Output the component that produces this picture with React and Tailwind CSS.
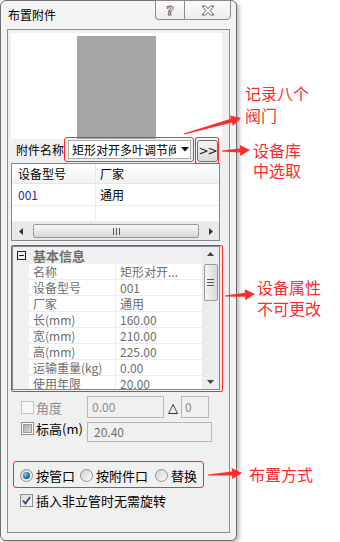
import React from 'react';

const ui = "font-['Noto_Sans_CJK_SC','Noto_Sans',sans-serif]";

const props = [
    ['名称', '矩形对开...'],
    ['设备型号', '001'],
    ['厂家', '通用'],
    ['长(mm)', '160.00'],
    ['宽(mm)', '210.00'],
    ['高(mm)', '225.00'],
    ['运输重量(kg)', '0.00'],
    ['使用年限', '20.00'],
];

// tapered red arrow, tail -> tip
const arrowPoints = (x1, y1, x2, y2) => {
    const len = Math.hypot(x2 - x1, y2 - y1);
    const dx = (x2 - x1) / len, dy = (y2 - y1) / len;
    const nx = -dy, ny = dx;
    const bx = x2 - dx * 10, by = y2 - dy * 10;
    const p = [
        [x1 + nx * 0.6, y1 + ny * 0.6],
        [bx + nx * 2, by + ny * 2],
        [bx + nx * 5.5, by + ny * 5.5],
        [x2, y2],
        [bx - nx * 5.5, by - ny * 5.5],
        [bx - nx * 2, by - ny * 2],
        [x1 - nx * 0.6, y1 - ny * 0.6],
    ];
    return p.map(([a, b]) => `${a.toFixed(1)},${b.toFixed(1)}`).join(' ');
};

const CheckBox = ({ state = 'off', disabled }) => (
    <div className={`w-[13px] h-[13px] shrink-0 border flex items-center justify-center ${disabled ? 'border-[#c4c4c4] bg-[#f6f6f6]' : 'border-[#8e8f8f] bg-white'}`}>
        {state === 'mixed' && <div className="w-[9px] h-[9px] bg-gradient-to-br from-[#a9a9a9] to-[#dcdcdc] border border-[#9a9a9a]" />}
        {state === 'on' && (
            <div className="w-[11px] h-[11px] bg-gradient-to-br from-[#dcdcdc] to-[#f8f8f8] flex items-center justify-center">
                <svg width="9" height="9" viewBox="0 0 9 9"><path d="M1 4.5 L3.5 7.5 L8 1" fill="none" stroke="#2a3d8f" strokeWidth="1.8" /></svg>
            </div>
        )}
    </div>
);

const Radio = ({ on }) => (
    <div className="w-[13px] h-[13px] shrink-0 rounded-full border border-[#8e8f8f] bg-gradient-to-br from-[#d4d4d4] to-[#fafafa] flex items-center justify-center">
        {on && <div className="w-[7px] h-[7px] rounded-full bg-[radial-gradient(circle_at_35%_35%,#7ed0f5,#1b6fa8_55%,#0d3f6b)]" />}
    </div>
);

export default function App() {
    return (
        <div className={`relative w-[340px] h-[542px] bg-white overflow-hidden text-[12px] leading-none text-black ${ui}`}>
            {/* window */}
            <div className="w-[237px] h-[541px] border border-[#6f6f6f] rounded-[6px] bg-[#f3f3f3] shadow-[2px_2px_4px_rgba(0,0,0,0.3)] flex flex-col">
                <div className="h-[28px] flex items-start shrink-0">
                    <span className="ml-[7px] mt-[8px] text-[12px]">布置附件</span>
                    <div className="ml-auto mr-[5px] -mt-[1px] flex h-[20px]">
                        <div className="w-[29px] border border-[#8a8a8a] border-r-0 rounded-bl-[4px] bg-gradient-to-b from-[#fbfbfb] to-[#ececec] flex items-center justify-center">
                            <span className="text-[13px] font-bold text-white [-webkit-text-stroke:0.8px_#5e5e5e] font-['DejaVu_Sans',sans-serif]">?</span>
                        </div>
                        <div className="w-[47px] border border-[#8a8a8a] rounded-br-[4px] bg-gradient-to-b from-[#fbfbfb] to-[#ececec] flex items-center justify-center">
                            <svg width="14" height="11" viewBox="0 0 14 11">
                                <path d="M1 1 H4.5 L7 3.6 L9.5 1 H13 L9 5.5 L13 10 H9.5 L7 7.4 L4.5 10 H1 L5 5.5 Z" fill="#fff" stroke="#5e5e5e" strokeWidth="1" />
                            </svg>
                        </div>
                    </div>
                </div>

                {/* inner panel */}
                <div className="ml-[6px] w-[223px] h-[504px] border border-[#8c8c8c] bg-[#f0f0f0] flex flex-col">
                    {/* preview */}
                    <div className="mt-[3px] ml-[3px] w-[211px] h-[106px] bg-white flex justify-center items-end">
                        <div className="w-[79px] h-[103px] bg-[#a6a6a6]" />
                    </div>

                    {/* name row */}
                    <div className="mt-[1px] h-[22px] flex items-start">
                        <span className="ml-[8px] w-[52px] mt-[4px] whitespace-nowrap overflow-hidden">附件名称</span>
                        <div className="w-[123px] h-[19px] border border-[#acacac] bg-white flex items-center">
                            <span className="ml-[3px] w-[104px] overflow-hidden whitespace-nowrap">矩形对开多叶调节阀</span>
                            <svg className="ml-[5px]" width="8" height="5" viewBox="0 0 8 5"><path d="M0 0 H8 L4 4.5 Z" fill="#111" /></svg>
                        </div>
                        <div className="ml-[6px] w-[21px] h-[22px] border border-[#707070] rounded-[3px] bg-gradient-to-b from-[#f3f3f3] to-[#dcdcdc] flex items-center justify-center text-[12px] text-[#222] font-['DejaVu_Sans',sans-serif] tracking-[-1px]">
                            &gt;&gt;
                        </div>
                    </div>

                    {/* device table */}
                    <div className="mt-[1px] ml-[3px] w-[209px] h-[78px] border border-[#828790] bg-white flex flex-col">
                        <div className="h-[20px] flex border-b border-[#e5e5e5] bg-gradient-to-b from-white to-[#f2f2f2]">
                            <div className="w-[84px] border-r border-[#e5e5e5] pl-[6px] flex items-center">设备型号</div>
                            <div className="pl-[4px] flex items-center">厂家</div>
                        </div>
                        <div className="h-[22px] flex border-b border-[#ececec]">
                            <div className="w-[84px] border-r border-[#ececec] pl-[6px] flex items-center text-[#1a2a9a]">001</div>
                            <div className="pl-[4px] flex items-center">通用</div>
                        </div>
                        <div className="h-[16px] flex border-b border-[#ececec]">
                            <div className="w-[84px] border-r border-[#ececec]" />
                        </div>
                        <div className="flex-1 bg-[#e9e9e9] flex items-center">
                            <svg className="ml-[7px]" width="4" height="7" viewBox="0 0 4 7"><path d="M4 0 V7 L0 3.5 Z" fill="#333" /></svg>
                            <div className="ml-[10px] w-[166px] h-[14px] rounded-[2px] border border-[#9a9a9a] bg-gradient-to-b from-[#f6f6f6] to-[#d8d8d8] flex items-center justify-center">
                                <svg width="7" height="7" viewBox="0 0 7 7"><path d="M0.5 0 V7 M3.5 0 V7 M6.5 0 V7" stroke="#555" strokeWidth="1" /></svg>
                            </div>
                            <svg className="ml-[10px]" width="4" height="7" viewBox="0 0 4 7"><path d="M0 0 V7 L4 3.5 Z" fill="#333" /></svg>
                        </div>
                    </div>

                    {/* property grid */}
                    <div className="mt-[5px] ml-[4px] w-[208px] h-[144px] border border-[#828790] bg-[#f0f0f0] flex overflow-hidden text-[#6d6d6d]">
                        <div className="flex-1 flex flex-col overflow-hidden">
                            <div className="h-[17px] shrink-0 flex items-center">
                                <div className="ml-[4px] w-[9px] h-[9px] border border-[#222] flex items-center justify-center">
                                    <div className="w-[5px] h-[1px] bg-[#222]" />
                                </div>
                                <span className="ml-[7px] font-bold text-[13px]">基本信息</span>
                            </div>
                            {props.map(([k, v]) => (
                                <div key={k} className="h-[16px] shrink-0 flex">
                                    <div className="w-[16px] shrink-0" />
                                    <div className="w-[87px] shrink-0 bg-white border-r border-b border-[#ececec] pl-[4px] flex items-center whitespace-nowrap">{k}</div>
                                    <div className="flex-1 bg-white border-b border-[#ececec] pl-[4px] flex items-center whitespace-nowrap">{v}</div>
                                </div>
                            ))}
                        </div>
                        <div className="w-[17px] shrink-0 bg-[#ececec] flex flex-col items-center">
                            <svg className="mt-[5px]" width="7" height="4" viewBox="0 0 7 4"><path d="M0 4 H7 L3.5 0 Z" fill="#444" /></svg>
                            <div className="mt-[8px] w-[14px] h-[37px] rounded-[2px] border border-[#9a9a9a] bg-gradient-to-r from-[#f6f6f6] to-[#d8d8d8] flex items-center justify-center">
                                <svg width="7" height="7" viewBox="0 0 7 7"><path d="M0 0.5 H7 M0 3.5 H7 M0 6.5 H7" stroke="#555" strokeWidth="1" /></svg>
                            </div>
                            <svg className="mt-auto mb-[5px]" width="7" height="4" viewBox="0 0 7 4"><path d="M0 0 H7 L3.5 4 Z" fill="#444" /></svg>
                        </div>
                    </div>

                    {/* angle row */}
                    <div className="mt-[6px] h-[22px] flex items-center">
                        <div className="ml-[13px] w-[66px] flex items-center">
                            <CheckBox disabled />
                            <span className="ml-[2px] text-[#8d8d8d] text-[13px]">角度</span>
                        </div>
                        <div className="w-[77px] h-[22px] border border-[#b8b8b8] bg-[#f0f0f0] pl-[4px] flex items-center text-[#8d8d8d]">0.00</div>
                        <span className="ml-[4px] w-[12px] text-[13px] font-['DejaVu_Sans',sans-serif]">△</span>
                        <div className="ml-[1px] w-[28px] h-[22px] border border-[#b8b8b8] bg-[#f0f0f0] pl-[3px] flex items-center text-[#8d8d8d]">0</div>
                    </div>

                    {/* elevation row */}
                    <div className="mt-[4px] h-[21px] flex items-start">
                        <div className="ml-[13px] w-[66px] flex items-center">
                            <CheckBox state="mixed" />
                            <span className="ml-[2px] text-[13px]">标高(m)</span>
                        </div>
                        <div className="w-[125px] h-[20px] border border-[#b8b8b8] bg-[#f0f0f0] pl-[6px] flex items-center text-[#6d6d6d]">20.40</div>
                    </div>

                    {/* placement mode */}
                    <div className="mt-[24px] h-[16px] flex items-center text-[13px]">
                        <div className="ml-[12px] w-[60px] flex items-center"><Radio on /><span className="ml-[3px]">按管口</span></div>
                        <div className="w-[75px] flex items-center"><Radio /><span className="ml-[3px]">按附件口</span></div>
                        <div className="flex items-center"><Radio /><span className="ml-[3px]">替换</span></div>
                    </div>

                    <div className="mt-[11px] h-[13px] flex items-center text-[13px]">
                        <div className="ml-[12px]"><CheckBox state="on" /></div>
                        <span className="ml-[3px]">插入非立管时无需旋转</span>
                    </div>
                </div>
            </div>

            {/* red highlight boxes */}
            <div className="absolute left-[64px] top-[137px] w-[130px] h-[25px] border border-[#ff2a2a] rounded-[3px]" />
            <div className="absolute left-[195px] top-[137px] w-[24px] h-[27px] border border-[#ff2a2a] rounded-[2px]" />
            <div className="absolute left-[11px] top-[245px] w-[212px] h-[147px] border border-[#ff2a2a] rounded-[2px]" />
            <div className="absolute left-[13px] top-[461px] w-[191px] h-[27px] border border-[#ff2a2a] rounded-[3px]" />

            {/* annotation arrows */}
            <svg className="absolute left-0 top-0 pointer-events-none" width="340" height="542">
                <polygon points={arrowPoints(184, 134, 241, 118)} fill="#ff2a2a" />
                <polygon points={arrowPoints(222, 151, 250, 150)} fill="#ff2a2a" />
                <polygon points={arrowPoints(225, 296, 255, 294)} fill="#ff2a2a" />
                <polygon points={arrowPoints(208, 475, 242, 473)} fill="#ff2a2a" />
            </svg>

            {/* annotation texts */}
            <div className="absolute left-[245px] top-[82px] text-[16px] leading-[22px] text-[#ff2a2a]">记录八个<br />阀门</div>
            <div className="absolute left-[253px] top-[140px] text-[16px] leading-[20px] text-[#ff2a2a]">设备库<br />中选取</div>
            <div className="absolute left-[257px] top-[277px] text-[16px] leading-[21px] text-[#ff2a2a]">设备属性<br />不可更改</div>
            <div className="absolute left-[249px] top-[464px] text-[16px] leading-[20px] text-[#ff2a2a]">布置方式</div>
        </div>
    );
}
